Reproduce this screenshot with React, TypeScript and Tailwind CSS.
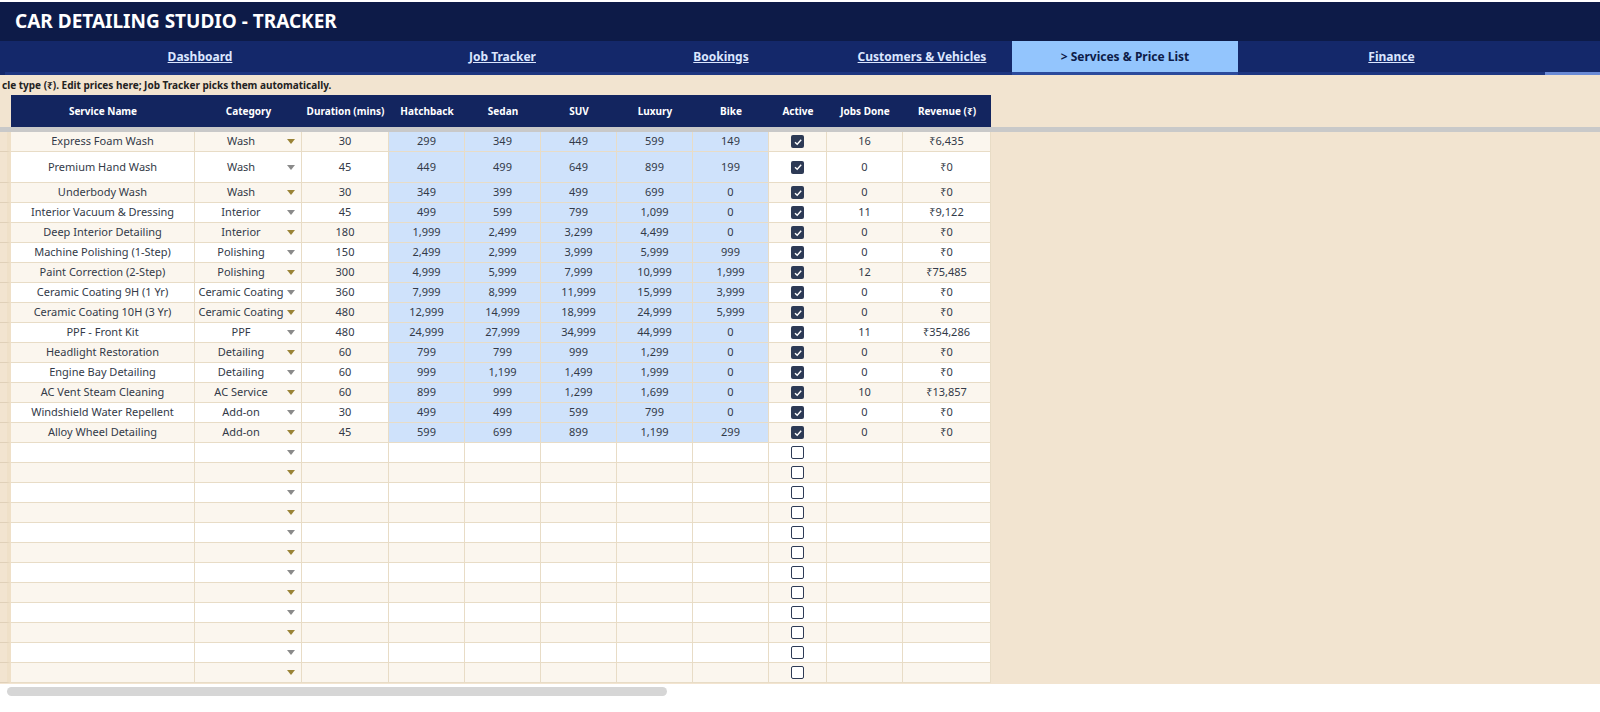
import React from "react";

const rows: [string, string, string, string, string, string, string, string, string, string][] = [
  ["Express Foam Wash", "Wash", "30", "299", "349", "449", "599", "149", "16", "₹6,435"],
  ["Premium Hand Wash", "Wash", "45", "449", "499", "649", "899", "199", "0", "₹0"],
  ["Underbody Wash", "Wash", "30", "349", "399", "499", "699", "0", "0", "₹0"],
  ["Interior Vacuum & Dressing", "Interior", "45", "499", "599", "799", "1,099", "0", "11", "₹9,122"],
  ["Deep Interior Detailing", "Interior", "180", "1,999", "2,499", "3,299", "4,499", "0", "0", "₹0"],
  ["Machine Polishing (1-Step)", "Polishing", "150", "2,499", "2,999", "3,999", "5,999", "999", "0", "₹0"],
  ["Paint Correction (2-Step)", "Polishing", "300", "4,999", "5,999", "7,999", "10,999", "1,999", "12", "₹75,485"],
  ["Ceramic Coating 9H (1 Yr)", "Ceramic Coating", "360", "7,999", "8,999", "11,999", "15,999", "3,999", "0", "₹0"],
  ["Ceramic Coating 10H (3 Yr)", "Ceramic Coating", "480", "12,999", "14,999", "18,999", "24,999", "5,999", "0", "₹0"],
  ["PPF - Front Kit", "PPF", "480", "24,999", "27,999", "34,999", "44,999", "0", "11", "₹354,286"],
  ["Headlight Restoration", "Detailing", "60", "799", "799", "999", "1,299", "0", "0", "₹0"],
  ["Engine Bay Detailing", "Detailing", "60", "999", "1,199", "1,499", "1,999", "0", "0", "₹0"],
  ["AC Vent Steam Cleaning", "AC Service", "60", "899", "999", "1,299", "1,699", "0", "10", "₹13,857"],
  ["Windshield Water Repellent", "Add-on", "30", "499", "499", "599", "799", "0", "0", "₹0"],
  ["Alloy Wheel Detailing", "Add-on", "45", "599", "699", "899", "1,199", "299", "0", "₹0"],
];

const widths = [184, 107, 87, 76, 76, 76, 76, 76, 58, 76, 88];
const heads = ["Service Name", "Category", "Duration (mins)", "Hatchback", "Sedan", "SUV", "Luxury", "Bike", "Active", "Jobs Done", "Revenue (₹)"];

const Check = ({ on }: { on: boolean }) =>
  on ? (
    <div className="w-[13px] h-[13px] rounded-[2px] bg-[#2d3a55] flex items-center justify-center">
      <svg width="10" height="10" viewBox="0 0 10 10"><path d="M2 5.2 L4.2 7.3 L8.2 2.8" stroke="white" strokeWidth="1.4" fill="none" /></svg>
    </div>
  ) : (
    <div className="w-[13px] h-[13px] rounded-[2px] border-[1.5px] border-[#2d3a55] bg-white" />
  );

function Row({ r, i }: { r: typeof rows[number] | null; i: number }) {
  const odd = i % 2 === 0;
  const bg = odd ? "bg-[#fbf6ee]" : "bg-white";
  const h = i === 1 ? "h-[31px]" : "h-[20px]";
  const cells: React.ReactNode[] = [];
  for (let c = 0; c < 11; c++) {
    const price = r && c >= 3 && c <= 7;
    let content: React.ReactNode = null;
    if (c === 1) {
      content = (
        <>
          <span className="flex-1 text-center">{r ? r[1] : ""}</span>
          <svg width="8" height="5" className="mr-[6px]" viewBox="0 0 8 5"><path d="M0 0 H8 L4 5Z" fill={odd ? "#9a8336" : "#8a8a8a"} /></svg>
        </>
      );
    } else if (c === 8) content = <Check on={!!r} />;
    else if (r) content = c < 8 ? r[c] : r[c - 1];
    cells.push(
      <div
        key={c}
        style={{ width: widths[c] }}
        className={`shrink-0 flex items-center justify-center border-r border-b border-[#e8dcc6] ${price ? "bg-[#cfe2fb]" : ""}`}
      >
        {content}
      </div>
    );
  }
  return (
    <div className={`flex ${h} ${bg} text-[11px] text-[#333a48]`}>
      <div className="w-[11px] shrink-0 bg-[#f2e4d0] border-b border-[#e0d0b8] border-r-[4px] border-r-[#efe0c8]" />
      {cells}
    </div>
  );
}

export default function App() {
  const tabs: [string, number, boolean][] = [
    ["Dashboard", 390, false],
    ["Job Tracker", 215, false],
    ["Bookings", 222, false],
    ["Customers & Vehicles", 180, false],
    ["> Services & Price List", 226, true],
    ["Finance", 307, false],
  ];
  return (
    <div className="w-[1600px] h-[712px] overflow-hidden bg-[#f2e4d0] font-['Inter','Liberation_Sans',sans-serif] relative">
      <div className="h-[2px] bg-white" />
      <div className="h-[39px] bg-[#0d1b48] flex items-center pl-[15px] text-white font-bold text-[19px]">CAR DETAILING STUDIO - TRACKER</div>
      <div className="flex h-[34px] bg-[#14286a] pl-[5px]">
        {tabs.map(([t, w, act], i) => (
          <div key={i} style={{ width: w }} className={`shrink-0 flex items-center justify-center text-[12px] font-bold ${act ? "bg-[#93c5fd] text-[#0d1b48] border-b-[3px] border-[#2b4a9c]" : "text-[#dbe6ff] underline border-b-[3px] border-[#1d3580]"}`}>
            {t}
          </div>
        ))}
        <div className="flex-1 border-b-[3px] border-[#6b8bd6]" />
      </div>
      <div className="h-[20px] flex items-center text-[10px] font-bold text-[#222] pl-[2px]">cle type (₹).  Edit prices here; Job Tracker picks them automatically.</div>
      <div className="flex h-[32px]">
        <div className="w-[11px]" />
        <div className="flex bg-[#13255f] text-white text-[10px] font-bold">
          {heads.map((h, i) => (
            <div key={i} style={{ width: widths[i] }} className="shrink-0 flex items-center justify-center">{h}</div>
          ))}
        </div>
      </div>
      <div className="h-[5px] bg-[#c9c9c9] w-[1600px]" />
      <div className="flex">
        <div>
          {rows.map((r, i) => <Row key={i} r={r} i={i} />)}
          {Array.from({ length: 12 }).map((_, i) => <Row key={"b" + i} r={null} i={i + 15} />)}
        </div>
      </div>
      <div className="absolute left-0 top-[684px] w-[1600px] h-[28px] bg-white">
        <div className="ml-[7px] mt-[3px] w-[660px] h-[9px] rounded-full bg-[#d6d6d6]" />
      </div>
    </div>
  );
}
